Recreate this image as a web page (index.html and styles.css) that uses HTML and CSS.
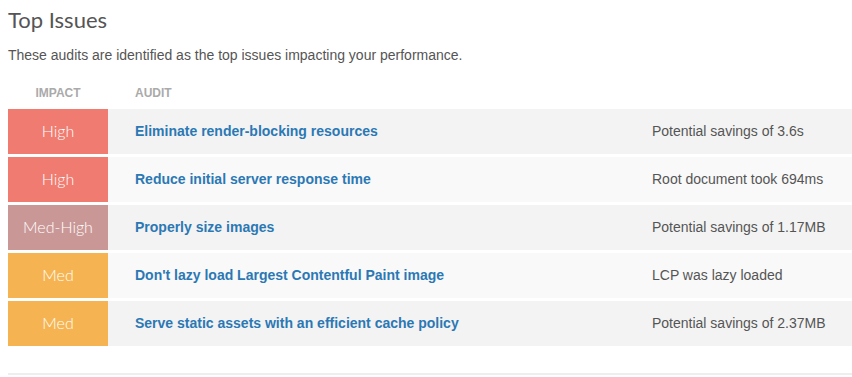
FILE: index.html
```html
<!DOCTYPE html>
<html>
<head>
<meta charset="utf-8">
<link rel="stylesheet" href="styles.css">
</head>
<body>
<div class="page">
  <h2 class="title">Top Issues</h2>
  <p class="intro">These audits are identified as the top issues impacting your performance.</p>
  <div class="table">
    <div class="head">
      <div class="h-impact">Impact</div>
      <div class="h-audit">Audit</div>
    </div>
    <div class="row odd">
      <div class="impact high">High</div>
      <div class="audit"><a href="#">Eliminate render-blocking resources</a></div>
      <div class="detail">Potential savings of 3.6s</div>
    </div>
    <div class="row even">
      <div class="impact high">High</div>
      <div class="audit"><a href="#">Reduce initial server response time</a></div>
      <div class="detail">Root document took 694ms</div>
    </div>
    <div class="row odd">
      <div class="impact medhigh">Med-High</div>
      <div class="audit"><a href="#">Properly size images</a></div>
      <div class="detail">Potential savings of 1.17MB</div>
    </div>
    <div class="row even">
      <div class="impact med">Med</div>
      <div class="audit"><a href="#">Don't lazy load Largest Contentful Paint image</a></div>
      <div class="detail">LCP was lazy loaded</div>
    </div>
    <div class="row odd">
      <div class="impact med">Med</div>
      <div class="audit"><a href="#">Serve static assets with an efficient cache policy</a></div>
      <div class="detail">Potential savings of 2.37MB</div>
    </div>
  </div>
  <div class="rule"></div>
</div>
</body>
</html>
```
FILE: styles.css
```css
html, body {
  margin: 0;
  padding: 0;
  background: #fff;
}
.page {
  padding: 0 0 0 8px;
  font-family: "Liberation Sans", Arial, sans-serif;
  color: #555;
}
.title {
  margin: 0;
  padding-top: 6px;
  font-family: "Lato", sans-serif;
  font-weight: 400;
  font-size: 22px;
  line-height: 28px;
  color: #555;
}
.intro {
  margin: 13px 0 0 0;
  font-size: 14px;
  line-height: 16px;
  color: #555;
}
.table {
  margin-top: 17px;
  display: flex;
  flex-direction: column;
  gap: 3px;
}
.head {
  display: flex;
  height: 26px;
  align-items: center;
  font-size: 12px;
  font-weight: bold;
  text-transform: uppercase;
  color: #aaa;
}
.h-impact {
  width: 100px;
  text-align: center;
}
.h-audit {
  padding-left: 27px;
}
.row {
  display: flex;
  height: 45px;
  align-items: stretch;
}
.row.odd { background: #f3f3f3; }
.row.even { background: #f9f9f9; }
.impact {
  width: 100px;
  flex: none;
  display: flex;
  align-items: center;
  justify-content: center;
  padding-bottom: 2px;
  font-family: "Lato", sans-serif;
  font-weight: 300;
  font-size: 16px;
  color: #fff;
}
.impact.high { background: #ef7b71; }
.impact.medhigh { background: #ca9797; }
.impact.med { background: #f5b451; }
.audit {
  width: 517px;
  flex: none;
  padding-left: 27px;
  padding-bottom: 2px;
  display: flex;
  align-items: center;
  font-size: 14px;
}
.audit a {
  color: #2b78b4;
  font-weight: bold;
  text-decoration: none;
}
.detail {
  flex: 1;
  display: flex;
  align-items: center;
  padding-bottom: 2px;
  font-size: 14px;
  color: #555;
}
.rule {
  margin-top: 27px;
  height: 2px;
  background: #eee;
}
```
